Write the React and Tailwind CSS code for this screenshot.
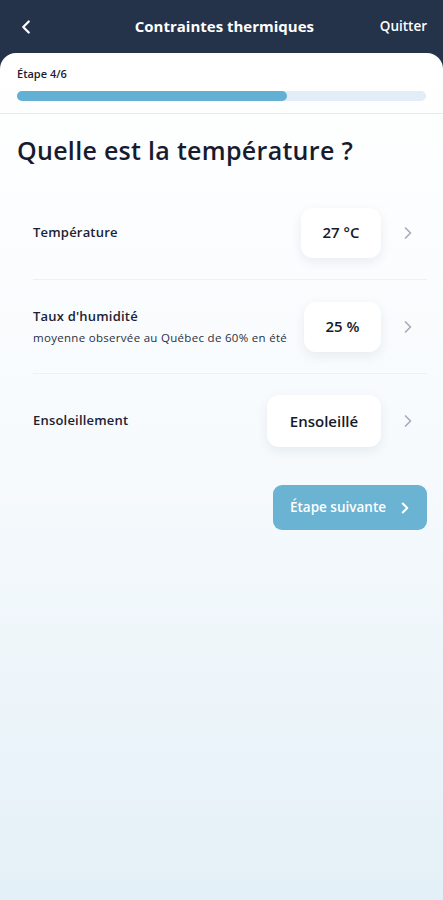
import { ChevronLeft, ChevronRight } from "lucide-react";

const rows = [
  { label: "Température", value: "27 °C", box: "w-[80px] h-[50px]" },
  {
    label: "Taux d'humidité",
    hint: "moyenne observée au Québec de 60% en été",
    value: "25 %",
    box: "w-[77px] h-[50px]",
  },
  { label: "Ensoleillement", value: "Ensoleillé", box: "w-[114px] h-[52px]" },
];

const App = () => {
  return (
    <div
      className="min-h-[900px] w-[443px] bg-[#24324a] flex flex-col"
      style={{ fontFamily: "'Open Sans', Lato, sans-serif" }}
    >
      {/* Barre du haut */}
      <header className="h-[53px] flex items-center justify-between px-4 text-white">
        <ChevronLeft size={22} strokeWidth={2.5} className="-ml-[1px]" />
        <h1 className="text-[15px] font-bold ml-[32px]">
          Contraintes thermiques
        </h1>
        <span className="text-[13.5px] font-semibold">Quitter</span>
      </header>

      <main className="flex-1 rounded-t-[16px] bg-gradient-to-b from-white via-[#f6fafd] to-[#e4f0f7] flex flex-col">
        {/* Progression */}
        <div className="px-[17px] pt-[13px] pb-[12px] border-b border-[#e8eaee]">
          <p className="text-[11px] font-semibold text-[#1c2233]">Étape 4/6</p>
          <div className="mt-[8px] h-[10px] rounded-full bg-[#e1eef7]">
            <div className="h-full w-[270px] rounded-full bg-[#62b1d4]" />
          </div>
        </div>

        <h2 className="px-[17px] mt-[18px] text-[25px] font-semibold text-[#161c2e] tracking-[0.3px]">
          Quelle est la température ?
        </h2>

        {/* Paramètres */}
        <div className="mt-[17px] pl-[33px] pr-[16px]">
          {rows.map((row, i) => (
            <div
              key={row.label}
              className={`flex items-center h-[94px] pr-[9px] ${
                i < rows.length - 1 ? "border-b border-[#eef0f3]" : ""
              }`}
            >
              <div className="flex-1 min-w-0">
                <p className="text-[13px] font-semibold text-[#1c2233] tracking-[0.2px]">
                  {row.label}
                </p>
                {row.hint && (
                  <p className="text-[11.5px] text-[#2a3040] mt-[2px] whitespace-nowrap tracking-[0.3px]">
                    {row.hint}
                  </p>
                )}
              </div>
              <div
                className={`${row.box} shrink-0 rounded-[12px] bg-white shadow-[0_4px_12px_rgba(30,50,80,0.08)] flex items-center justify-center text-[15px] font-semibold text-[#141a2a]`}
              >
                {row.value}
              </div>
              <ChevronRight
                size={20}
                strokeWidth={2}
                className="ml-[17px] text-[#a6abbb]"
              />
            </div>
          ))}
        </div>

        <div className="flex justify-end px-[16px] mt-[17px]">
          <button className="w-[154px] h-[45px] rounded-[9px] bg-[#6ab3d3] text-white text-[13.5px] font-semibold flex items-center justify-center gap-[10px] pl-[4px]">
            Étape suivante
            <ChevronRight size={18} strokeWidth={2.75} />
          </button>
        </div>
      </main>
    </div>
  );
};

export default App;
